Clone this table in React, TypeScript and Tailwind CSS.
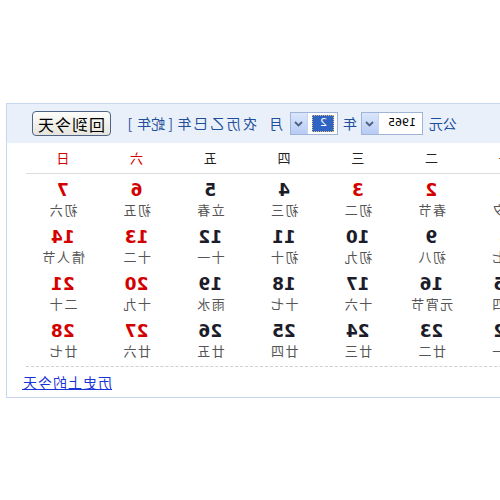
import React from "react";

type Cell = { d: number; l: string; red?: boolean };

const rows: Cell[][] = [
  [
    { d: 1, l: "除夕" },
    { d: 2, l: "春节", red: true },
    { d: 3, l: "初二", red: true },
    { d: 4, l: "初三" },
    { d: 5, l: "立春" },
    { d: 6, l: "初五", red: true },
    { d: 7, l: "初六", red: true },
  ],
  [
    { d: 8, l: "初七" },
    { d: 9, l: "初八" },
    { d: 10, l: "初九" },
    { d: 11, l: "初十" },
    { d: 12, l: "十一" },
    { d: 13, l: "十二", red: true },
    { d: 14, l: "情人节", red: true },
  ],
  [
    { d: 15, l: "十四" },
    { d: 16, l: "元宵节" },
    { d: 17, l: "十六" },
    { d: 18, l: "十七" },
    { d: 19, l: "雨水" },
    { d: 20, l: "十九", red: true },
    { d: 21, l: "二十", red: true },
  ],
  [
    { d: 22, l: "廿一" },
    { d: 23, l: "廿二" },
    { d: 24, l: "廿三" },
    { d: 25, l: "廿四" },
    { d: 26, l: "廿五" },
    { d: 27, l: "廿六", red: true },
    { d: 28, l: "廿七", red: true },
  ],
];

const weekdays = ["一", "二", "三", "四", "五", "六", "日"];

function Chevron() {
  return (
    <div className="w-[17px] h-full bg-gradient-to-b from-[#dbe6fb] to-[#b7cbf5] border-l border-[#c3d3f3] flex items-center justify-center">
      <svg width="9" height="6" viewBox="0 0 9 6">
        <path d="M1 1 L4.5 4.5 L8 1" stroke="#4d6185" strokeWidth="1.8" fill="none" />
      </svg>
    </div>
  );
}

export default function App() {
  const cjk = { fontFamily: '"Noto Sans CJK SC", "Noto Sans", sans-serif' };
  return (
    <div className="w-[500px] h-[500px] bg-white overflow-hidden -scale-x-100" style={cjk}>
      <div className="pt-[103px]">
        <div className="ml-[-62px] w-[556px] border border-[#c8d7f0] bg-white">
          {/* header */}
          <div className="h-[39px] bg-[#eaf0fa] flex items-center pl-[104px] text-[14px] text-[#1d4f9c]">
            <span>公元</span>
            <div className="ml-[6px] w-[62px] h-[23px] border border-[#9fb4d6] bg-white flex items-stretch">
              <div className="flex-1 flex items-center pl-[6px] text-[11px] text-black" style={{ fontFamily: '"DejaVu Sans", sans-serif' }}>
                1965
              </div>
              <Chevron />
            </div>
            <span className="ml-[4px]">年</span>
            <div className="ml-[5px] w-[48px] h-[23px] border border-[#9fb4d6] bg-white flex items-stretch">
              <div className="flex-1 flex items-center pl-[3px]">
                <div className="w-[22px] h-[17px] bg-[#2f63c4] border border-dotted border-[#e0c070] text-white text-[11px] flex items-center pl-[6px]" style={{ fontFamily: '"DejaVu Sans", sans-serif' }}>
                  2
                </div>
              </div>
              <Chevron />
            </div>
            <span className="ml-[7px]">月</span>
            <span className="ml-[12px] tracking-[2.4px]">农历乙巳年</span>
            <span className="ml-[2px]">[</span>
            <span className="ml-[3px]">蛇年</span>
            <span className="ml-[5px]">]</span>
            <button className="ml-[17px] w-[79px] h-[25px] rounded-[4px] border border-[#4f6586] bg-gradient-to-b from-[#fdfdfb] to-[#e6e4dc] text-[16px] tracking-[1px] text-black leading-none flex items-center justify-center">
              回到今天
            </button>
          </div>
          {/* body */}
          <div className="px-[19px]">
            <div className="grid grid-cols-7 h-[31px] border-b border-[#dcdcdc] items-center text-[13px]">
              {weekdays.map((w, i) => (
                <div key={w} className={`text-center ${i >= 5 ? "text-[#d40000]" : "text-[#222]"}`}>
                  {w}
                </div>
              ))}
            </div>
            <div className="pb-[4px] border-b border-dashed border-[#cfcfcf]">
              {rows.map((r, ri) => (
                <div key={ri} className="grid grid-cols-7 h-[47px]">
                  {r.map((c) => (
                    <div key={c.d} className="flex flex-col items-center pt-[5px]">
                      <span
                        className={`text-[17px] font-bold leading-[22px] ${c.red ? "text-[#d40000]" : "text-[#1c1c2a]"}`}
                        style={{ fontFamily: '"DejaVu Sans", sans-serif' }}
                      >
                        {c.d}
                      </span>
                      <span className="text-[13px] leading-[18px] tracking-[1.5px] text-[#555]">{c.l}</span>
                    </div>
                  ))}
                </div>
              ))}
            </div>
          </div>
          {/* footer */}
          <div className="h-[30px] flex items-center justify-end pr-[15px]">
            <a className="text-[14px] tracking-[1px] text-[#1a33d6] underline cursor-pointer">历史上的今天</a>
          </div>
        </div>
      </div>
    </div>
  );
}
